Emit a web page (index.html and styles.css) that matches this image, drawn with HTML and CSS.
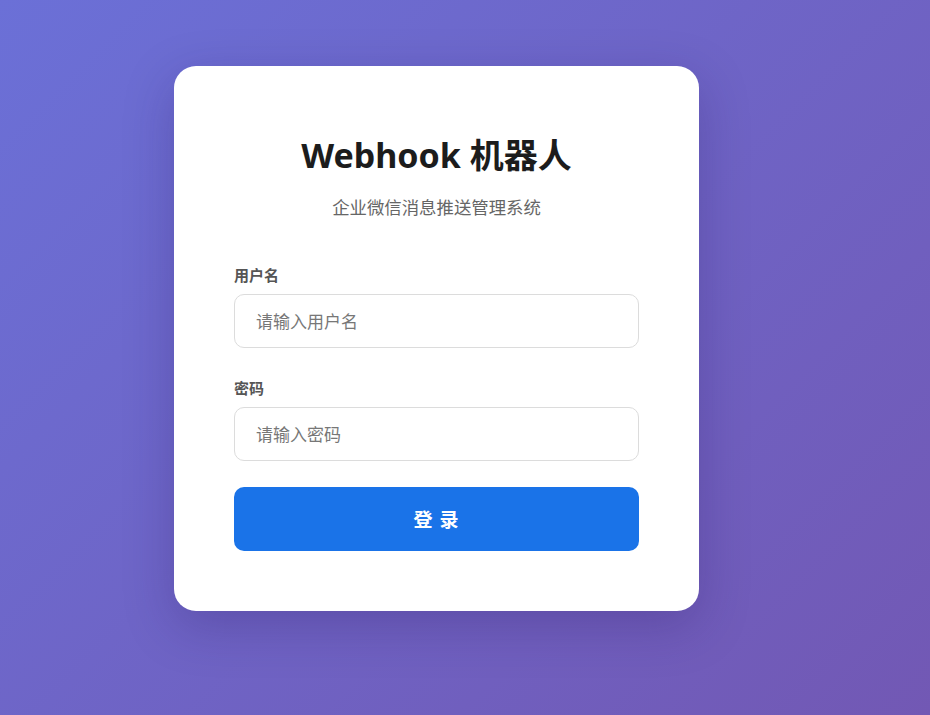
FILE: index.html
```html
<!DOCTYPE html>
<html lang="zh-CN">
<head>
<meta charset="utf-8">
<title>Webhook 机器人</title>
<link rel="stylesheet" href="styles.css">
</head>
<body>
<div class="page">
  <div class="card">
    <h1 class="title">Webhook 机器人</h1>
    <p class="subtitle">企业微信消息推送管理系统</p>
    <form class="form">
      <div class="field">
        <label class="label" for="u">用户名</label>
        <input class="input" id="u" type="text" placeholder="请输入用户名">
      </div>
      <div class="field">
        <label class="label" for="p">密码</label>
        <input class="input" id="p" type="password" placeholder="请输入密码">
      </div>
      <button class="btn" type="button">登 录</button>
    </form>
  </div>
</div>
</body>
</html>
```
FILE: styles.css
```css
* { box-sizing: border-box; }
html, body { margin: 0; padding: 0; }
body {
  font-family: "Noto Sans", "Noto Sans CJK SC", sans-serif;
  background: linear-gradient(135deg, #6b70d7 0%, #7258b4 100%);
  height: 715px;
  overflow: hidden;
}
.page {
  padding: 66px 0 0 174px;
}
.card {
  width: 525px;
  background: #fff;
  border-radius: 22px;
  padding: 69px 60px 60px;
  box-shadow: 0 15px 50px rgba(40, 20, 90, 0.25);
}
.title {
  margin: 0;
  text-align: center;
  font-size: 34px;
  line-height: 40px;
  font-weight: 700;
  color: #1c1c1c;
}
.subtitle {
  margin: 20px 0 0;
  text-align: center;
  font-size: 17.4px;
  line-height: 24px;
  color: #666;
}
.form {
  margin-top: 46px;
  display: flex;
  flex-direction: column;
}
.field {
  display: flex;
  flex-direction: column;
  gap: 9px;
  margin-bottom: 30px;
}
.field + .field { margin-bottom: 26px; }
.label {
  font-size: 15px;
  line-height: 20px;
  font-weight: 700;
  color: #555;
}
.input {
  height: 54px;
  border: 1px solid #dcdcdc;
  border-radius: 10px;
  padding: 0 21px;
  font-family: inherit;
  font-size: 17px;
  color: #333;
  outline: none;
  background: #fff;
}
.input::placeholder { color: #777; }
.btn {
  height: 64px;
  border: none;
  border-radius: 10px;
  background: #1a73e8;
  color: #fff;
  font-family: inherit;
  font-size: 19px;
  font-weight: 700;
  letter-spacing: 1px;
  cursor: pointer;
}
```
